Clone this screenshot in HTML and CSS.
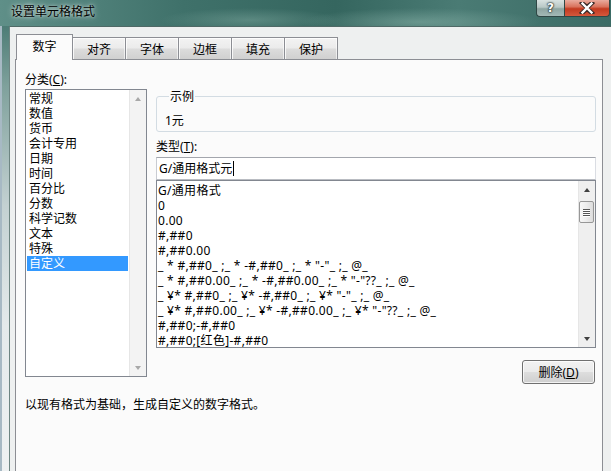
FILE: index.html
```html
<!DOCTYPE html>
<html lang="zh-CN">
<head>
<meta charset="utf-8">
<title>设置单元格格式</title>
<link rel="stylesheet" href="styles.css">
</head>
<body>
<div class="window">
  <div class="titlebar">
    <span class="title">设置单元格格式</span>
    <div class="caption-buttons">
      <div class="cap-btn cap-help"><span class="help-glyph">?</span></div>
      <div class="cap-btn cap-close">
        <svg width="16" height="12" viewBox="0 0 16 12">
          <path d="M3 1 L8 5 L13 1 M3 11 L8 7 L13 11 M3 1 L13 11 M13 1 L3 11" fill="none" stroke="#3a2a28" stroke-width="4.2" stroke-linecap="square"/>
          <path d="M3.5 1.5 L12.5 10.5 M12.5 1.5 L3.5 10.5" fill="none" stroke="#ffffff" stroke-width="2.4" stroke-linecap="square"/>
        </svg>
      </div>
    </div>
  </div>
  <div class="frame-body">
    <div class="frame-left"></div>
    <div class="client">
      <div class="tabs">
        <div class="tab active">数字</div>
        <div class="tab">对齐</div>
        <div class="tab">字体</div>
        <div class="tab">边框</div>
        <div class="tab">填充</div>
        <div class="tab">保护</div>
      </div>
      <div class="panel">
        <div class="main-row">
          <div class="left-col">
            <div class="label">分类(<u>C</u>):</div>
            <div class="listbox">
              <ul class="cat-items">
                <li>常规</li>
                <li>数值</li>
                <li>货币</li>
                <li>会计专用</li>
                <li>日期</li>
                <li>时间</li>
                <li>百分比</li>
                <li>分数</li>
                <li>科学记数</li>
                <li>文本</li>
                <li>特殊</li>
                <li class="selected">自定义</li>
              </ul>
              <div class="vscroll disabled">
                <div class="sb-btn"><span class="arrow-up"></span></div>
                <div class="sb-track"></div>
                <div class="sb-btn"><span class="arrow-down"></span></div>
              </div>
            </div>
          </div>
          <div class="right-col">
            <fieldset class="sample">
              <legend>示例</legend>
              <div class="sample-value">1元</div>
            </fieldset>
            <div class="label type-label">类型(<u>T</u>):</div>
            <div class="textbox">G/通用格式元<span class="caret"></span></div>
            <div class="fmt-list">
              <ul class="fmt-items">
                <li>G/通用格式</li>
                <li>0</li>
                <li>0.00</li>
                <li>#,##0</li>
                <li>#,##0.00</li>
                <li>_ * #,##0_ ;_ * -#,##0_ ;_ * "-"_ ;_ @_</li>
                <li>_ * #,##0.00_ ;_ * -#,##0.00_ ;_ * "-"??_ ;_ @_</li>
                <li>_ ¥* #,##0_ ;_ ¥* -#,##0_ ;_ ¥* "-"_ ;_ @_</li>
                <li>_ ¥* #,##0.00_ ;_ ¥* -#,##0.00_ ;_ ¥* "-"??_ ;_ @_</li>
                <li>#,##0;-#,##0</li>
                <li>#,##0;[红色]-#,##0</li>
              </ul>
              <div class="vscroll">
                <div class="sb-btn"><span class="arrow-up"></span></div>
                <div class="sb-track">
                  <div class="sb-thumb"><span></span><span></span><span></span><span></span></div>
                </div>
                <div class="sb-btn"><span class="arrow-down"></span></div>
              </div>
            </div>
            <div class="btn-row">
              <button class="btn">删除(<u>D</u>)</button>
            </div>
          </div>
        </div>
        <p class="desc">以现有格式为基础，生成自定义的数字格式。</p>
      </div>
    </div>
  </div>
</div>
</body>
</html>
```

FILE: styles.css
```css
* { box-sizing: border-box; }

html, body {
  margin: 0;
  padding: 0;
}

body {
  width: 611px;
  height: 471px;
  overflow: hidden;
  font-family: "Noto Sans", "Noto Sans CJK SC", sans-serif;
  font-size: 12px;
  color: #000;
  background: #eef0f0;
}

.window {
  width: 611px;
  height: 471px;
  display: flex;
  flex-direction: column;
}

/* ---------- title bar ---------- */
.titlebar {
  height: 26px;
  flex: none;
  display: flex;
  align-items: flex-start;
  background:
    radial-gradient(ellipse 120px 14px at 420px 22px, rgba(150,190,180,0.45), rgba(150,190,180,0) 100%),
    radial-gradient(ellipse 90px 12px at 250px 20px, rgba(140,180,170,0.4), rgba(140,180,170,0) 100%),
    linear-gradient(to right, #5f8f88 0%, #3f716a 30%, #35665f 55%, #4a7b74 75%, #3b6b65 100%);
}

.title {
  padding-left: 11px;
  line-height: 24px;
  color: #000;
  text-shadow: 0 0 6px rgba(255,255,255,0.75), 0 0 3px rgba(255,255,255,0.6);
}

.caption-buttons {
  margin-left: auto;
  margin-right: 1px;
  display: flex;
}

.cap-btn {
  height: 17px;
  border: 1px solid #2f4745;
  border-top: none;
  display: flex;
  align-items: center;
  justify-content: center;
}

.cap-help {
  width: 28px;
  border-bottom-left-radius: 4px;
  border-right: none;
  background: linear-gradient(to bottom, #d9e2e1 0%, #b8c8c6 45%, #8ea5a2 55%, #a3b9b6 100%);
}

.help-glyph {
  font-family: "DejaVu Sans", sans-serif;
  font-weight: bold;
  font-size: 12px;
  line-height: 14px;
  color: #fff;
  text-shadow: 0 0 1px #1d2b2a, 0 0 2px #1d2b2a, 0 0 2px #1d2b2a;
}

.cap-close {
  width: 46px;
  border-bottom-right-radius: 4px;
  background: linear-gradient(to bottom, #e9ab9e 0%, #d9735d 42%, #c33a20 55%, #d4583c 100%);
}

/* ---------- frame + client ---------- */
.frame-body {
  flex: 1;
  display: flex;
  min-height: 0;
}

.frame-left {
  width: 9px;
  flex: none;
  border-left: 2px solid #a7b9c4;
  background: linear-gradient(to bottom, #4d7c76 0px, #7fa19c 60px, #c3d1d2 180px, #e4eaeb 300px, #eef1f2 445px);
}

.client {
  flex: 1;
  border-top: 1px solid #4f6966;
  border-left: 1px solid #6d8582;
  padding: 7px 0 0 5px;
  background: #eef0f0;
  display: flex;
  flex-direction: column;
}

/* ---------- tabs ---------- */
.tabs {
  display: flex;
  align-items: flex-end;
  padding-left: 1px;
  margin-bottom: -1px;
  position: relative;
  z-index: 1;
}

.tab {
  width: 54px;
  height: 22px;
  margin-left: -1px;
  margin-bottom: 1px;
  border: 1px solid #8c8e94;
  border-bottom: none;
  text-align: center;
  line-height: 23px;
  background: linear-gradient(to bottom, #f3f3f3 0%, #ebebeb 48%, #dcdcdc 52%, #d0d0d0 100%);
  box-shadow: inset 1px 1px 0 rgba(255,255,255,0.8), inset -1px 0 0 rgba(255,255,255,0.6);
}

.tab.active {
  width: 57px;
  height: 26px;
  margin-left: 0;
  margin-bottom: 0;
  line-height: 24px;
  background: #fbfbfb;
  box-shadow: none;
  position: relative;
  z-index: 2;
}

/* ---------- panel ---------- */
.panel {
  width: 588px;
  flex: 1;
  background: #fbfbfb;
  border: 1px solid #8c8e94;
  border-bottom: none;
  padding: 12px 0 0 9px;
}

.main-row {
  display: flex;
  gap: 9px;
  align-items: flex-start;
}

.label {
  line-height: 15px;
  height: 15px;
}

.label u, .btn u {
  text-decoration: underline;
  text-underline-offset: 1px;
}

.left-col {
  width: 122px;
  flex: none;
}

.listbox {
  margin-top: 2px;
  height: 288px;
  border: 1px solid #828790;
  background: #ffffff;
  display: flex;
}

.cat-items {
  list-style: none;
  margin: 0;
  padding: 1px;
  flex: 1;
}

.cat-items li {
  height: 15px;
  line-height: 15px;
  padding-left: 2px;
  white-space: nowrap;
}

.cat-items li.selected {
  background: #3399ff;
  color: #fff;
}

/* ---------- scrollbars ---------- */
.vscroll {
  width: 17px;
  flex: none;
  display: flex;
  flex-direction: column;
  background: #efefef;
  border-left: 1px solid #e6e6e6;
}

.sb-btn {
  height: 17px;
  flex: none;
  display: flex;
  align-items: center;
  justify-content: center;
}

.sb-track {
  flex: 1;
  padding-top: 3px;
}

.arrow-up, .arrow-down {
  width: 0;
  height: 0;
  border-left: 3.5px solid transparent;
  border-right: 3.5px solid transparent;
}

.arrow-up { border-bottom: 4px solid #404040; }
.arrow-down { border-top: 4px solid #404040; }

.vscroll.disabled .arrow-up { border-bottom-color: #a8a8a8; }
.vscroll.disabled .arrow-down { border-top-color: #a8a8a8; }
.vscroll.disabled { background: #f3f3f3; }

.sb-thumb {
  width: 15px;
  height: 22px;
  margin-left: 0;
  border: 1px solid #979797;
  border-radius: 2px;
  background: linear-gradient(to right, #f7f7f7 0%, #ececec 50%, #dcdcdc 100%);
  display: flex;
  flex-direction: column;
  align-items: center;
  justify-content: center;
  gap: 1px;
}

.sb-thumb span {
  width: 7px;
  height: 1px;
  background: #555;
  box-shadow: 0 1px 0 #fff;
}

/* ---------- right column ---------- */
.right-col {
  width: 440px;
  flex: none;
  display: flex;
  flex-direction: column;
}

.sample {
  margin: 17px 0 0 0;
  padding: 9px 0 3px 8px;
  border: 1px solid #d3dce3;
  border-radius: 3px;
  min-width: 0;
}

.sample legend {
  margin-left: 4px;
  padding: 0 1px;
  line-height: 15px;
}

.sample-value {
  line-height: 15px;
}

.type-label {
  margin-top: 7px;
}

.textbox {
  margin-top: 3px;
  height: 23px;
  border: 1px solid #a3a6ad;
  border-color: #a3a6ad #dadde3 #b9bcc2 #c9ccd2;
  background: #fff;
  padding-left: 2px;
  line-height: 21px;
  display: flex;
  align-items: center;
}

.caret {
  display: inline-block;
  width: 1px;
  height: 15px;
  background: #000;
  margin-left: 1px;
}

.fmt-list {
  height: 168px;
  border: 1px solid #828790;
  background: #fff;
  display: flex;
}

.fmt-items {
  list-style: none;
  margin: 0;
  padding: 2px 0 0 1px;
  flex: 1;
  letter-spacing: 0.3px;
}

.fmt-items li {
  height: 15px;
  line-height: 15px;
  white-space: pre;
}

.btn-row {
  display: flex;
  justify-content: flex-end;
  margin-top: 12px;
  padding-right: 1px;
}

.btn {
  width: 73px;
  height: 24px;
  padding: 0;
  font: inherit;
  color: #000;
  border: 1px solid #707070;
  border-radius: 3px;
  background: linear-gradient(to bottom, #f2f2f2 0%, #ebebeb 48%, #dddddd 52%, #cfcfcf 100%);
  box-shadow: inset 0 0 0 1px rgba(255,255,255,0.75);
}

.desc {
  margin: 13px 0 0 0;
  line-height: 15px;
}
```
